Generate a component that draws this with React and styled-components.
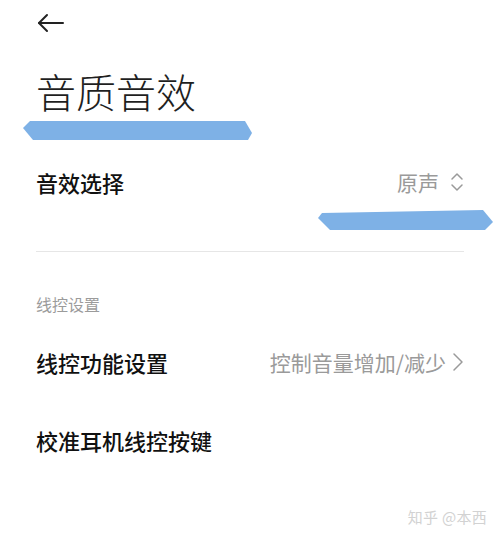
import React from 'react'
import styled, { createGlobalStyle } from 'styled-components'

const GlobalStyle = createGlobalStyle`
  html, body {
    margin: 0;
    padding: 0;
    background: #fff;
  }
  body {
    font-family: "Noto Sans CJK SC", "Noto Sans", sans-serif;
    -webkit-font-smoothing: antialiased;
  }
`

const Page = styled.div`
  position: relative;
  width: 500px;
  height: 538px;
  overflow: hidden;
  box-sizing: border-box;
  padding: 0 36px;
  display: flex;
  flex-direction: column;
`

const Header = styled.div`
  height: 46px;
  display: flex;
  align-items: center;
`

const BackButton = styled.button`
  border: 0;
  background: none;
  padding: 0;
  margin-left: 1px;
  display: flex;
  cursor: pointer;
`

const Title = styled.h1`
  margin: 21px 0 0;
  font-size: 40px;
  line-height: 48px;
  font-weight: 300;
  color: #1f1f1f;
`

const Row = styled.div`
  height: 78px;
  margin-top: ${(p) => p.$top || 0}px;
  display: flex;
  align-items: center;
  justify-content: space-between;
`

const Label = styled.span`
  font-size: 22px;
  font-weight: 500;
  color: #111;
`

const Value = styled.span`
  display: flex;
  align-items: center;
  gap: ${(p) => p.$gap || 10}px;
  font-size: 21px;
  color: #9a9a9a;
`

const Divider = styled.hr`
  border: 0;
  height: 1px;
  background: #e6e6e6;
  margin: 30px 0 0;
`

const SectionLabel = styled.div`
  margin-top: 40px;
  font-size: 16px;
  line-height: 24px;
  color: #9b9b9b;
`

const Watermark = styled.div`
  position: absolute;
  right: 13px;
  bottom: 11px;
  font-size: 15px;
  color: #d2d2d2;
  letter-spacing: 0.3px;
`

// hand-drawn highlighter marks laid over the page
const Marker = styled.svg`
  position: absolute;
  left: ${(p) => p.$x}px;
  top: ${(p) => p.$y}px;
  pointer-events: none;
`

const BackArrow = () => (
  <svg width="28" height="20" viewBox="0 0 28 20" fill="none" stroke="#222" strokeWidth="2" strokeLinecap="round" strokeLinejoin="round">
    <path d="M2 10h24" />
    <path d="M10 2L2 10l8 8" />
  </svg>
)

const UpDown = () => (
  <svg width="14" height="22" viewBox="0 0 14 22" fill="none" stroke="#9a9a9a" strokeWidth="1.5" strokeLinecap="round" strokeLinejoin="round">
    <path d="M2 8l5-5 5 5" />
    <path d="M2 14l5 5 5-5" />
  </svg>
)

const ChevronRight = () => (
  <svg width="12" height="20" viewBox="0 0 12 20" fill="none" stroke="#9a9a9a" strokeWidth="1.5" strokeLinecap="round" strokeLinejoin="round">
    <path d="M2 2l8 8-8 8" />
  </svg>
)

export default function App() {
  return (
    <>
      <GlobalStyle />
      <Page>
        <Header>
          <BackButton aria-label="返回">
            <BackArrow />
          </BackButton>
        </Header>
        <Title>音质音效</Title>

        <Row $top={28}>
          <Label>音效选择</Label>
          <Value $gap={11}>
            原声
            <UpDown />
          </Value>
        </Row>
        <Divider />

        <SectionLabel>线控设置</SectionLabel>
        <Row $top={7}>
          <Label>线控功能设置</Label>
          <Value $gap={6}>
            控制音量增加/减少
            <ChevronRight />
          </Value>
        </Row>
        <Row>
          <Label>校准耳机线控按键</Label>
        </Row>

        <Marker $x={22} $y={120} width="232" height="22" viewBox="0 0 232 22">
          <path d="M8 1 L223 1 L230 13 L226 20 L11 20 L1 8 Z" fill="#7eb1e6" />
        </Marker>
        <Marker $x={317} $y={208} width="178" height="24" viewBox="0 0 178 24">
          <path d="M5 5 L166 2 L176 14 L168 22 L13 22 L1 10 Z" fill="#7eb1e6" />
        </Marker>

        <Watermark>知乎 @本西</Watermark>
      </Page>
    </>
  )
}
